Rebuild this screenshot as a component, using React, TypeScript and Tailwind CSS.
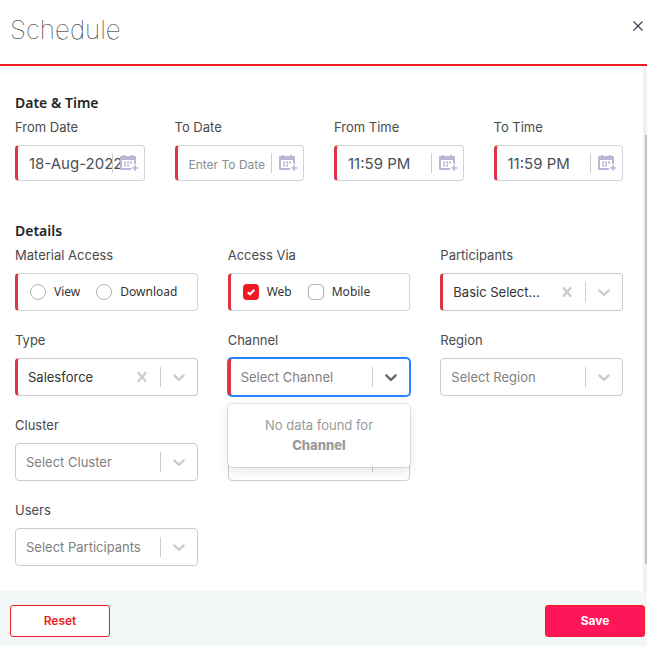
import React from "react";

const FONT = "font-['Inter','Open_Sans',sans-serif]";
const ALT_FONT = "font-['Noto_Sans','Open_Sans',sans-serif]";

function CalendarIcon() {
  return (
    <svg viewBox="0 0 19 16" className="h-4 w-[19px]" fill="#b9b7d6" aria-hidden="true">
      <path d="M3 0h2v2H3zM11 0h2v2h-2z" />
      <path d="M1 1h14a1 1 0 0 1 1 1v3H0V2a1 1 0 0 1 1-1z" />
      <path d="M0 5h2v8h9v2H1a1 1 0 0 1-1-1zM14 5h2v4h-2z" />
      <path d="M4 6.5h2v2H4zM7 6.5h2v2H7zM10 6.5h2v2h-2zM4 9.5h2v2H4zM7 9.5h2v2H7z" />
      <path d="M14.3 10h1.6v2.2h2.3v1.6h-2.3V16h-1.6v-2.2H12v-1.6h2.3z" />
    </svg>
  );
}

function Chevron({ active = false }: { active?: boolean }) {
  return (
    <svg viewBox="0 0 20 20" width="20" height="20" fill={active ? "#666666" : "#cccccc"} aria-hidden="true">
      <path d="M4.516 7.548c0.436-0.446 1.043-0.481 1.576 0l3.908 3.747 3.908-3.747c0.533-0.481 1.141-0.446 1.574 0 0.436 0.445 0.408 1.197 0 1.615-0.406 0.418-4.695 4.502-4.695 4.502-0.217 0.223-0.502 0.335-0.787 0.335s-0.57-0.112-0.789-0.335c0 0-4.287-4.084-4.695-4.502s-0.436-1.17 0-1.615z" />
    </svg>
  );
}

function ClearIcon() {
  return (
    <svg viewBox="0 0 20 20" width="20" height="20" fill="#cccccc" aria-hidden="true">
      <path d="M14.348 14.849c-0.469 0.469-1.229 0.469-1.697 0l-2.651-3.030-2.651 3.029c-0.469 0.469-1.229 0.469-1.697 0-0.469-0.469-0.469-1.229 0-1.697l2.758-3.15-2.759-3.152c-0.469-0.469-0.469-1.228 0-1.697s1.228-0.469 1.697 0l2.652 3.031 2.651-3.031c0.469-0.469 1.228-0.469 1.697 0s0.469 1.229 0 1.697l-2.758 3.152 2.758 3.15c0.469 0.469 0.469 1.229 0 1.698z" />
    </svg>
  );
}

const labelClass = "block text-[13px] leading-5 text-[#4a4a4a]";

function PickerField({ id, label, value, placeholder }: { id: string; label: string; value?: string; placeholder?: string }) {
  return (
    <div className="min-w-0">
      <label htmlFor={id} className={labelClass}>{label}</label>
      <div className="relative mt-2">
        <input
          id={id}
          type="text"
          defaultValue={value}
          placeholder={placeholder}
          className="block h-9 w-full rounded border border-l-3 border-[#ced4da] border-l-[#dc3545] bg-white pl-[11px] text-[15px] text-[#495057] outline-none placeholder:text-xs placeholder:text-[#868e96]"
        />
        <div className="pointer-events-none absolute inset-y-0 right-[6px] flex items-center gap-[7px]">
          <span className="h-5 w-px bg-[#cccccc]" />
          <CalendarIcon />
        </div>
      </div>
    </div>
  );
}

type SelectProps = {
  id: string;
  label?: string;
  value?: string;
  placeholder?: string;
  required?: boolean;
  focused?: boolean;
  children?: React.ReactNode;
};

function SelectField({ id, label, value, placeholder, required, focused, children }: SelectProps) {
  const edge = required ? "border-l-3 border-l-[#dc3545]" : "border-l-[#cccccc]";
  const ring = focused
    ? "border-y-[#2684ff] border-r-[#2684ff] ring-1 ring-[#2684ff]"
    : "border-y-[#cccccc] border-r-[#cccccc]";
  return (
    <div className="relative min-w-0">
      <label htmlFor={id} className={`${labelClass} min-h-5`}>{label}</label>
      <div className={`mt-2 flex h-[38px] items-center rounded border bg-white pl-[10px] ${edge} ${ring}`}>
        <select
          id={id}
          className={`h-full min-w-0 flex-1 appearance-none bg-transparent pt-0.5 text-[13px] outline-none ${value ? "text-[#333333]" : "text-[#808080]"}`}
        >
          <option>{value ?? placeholder}</option>
        </select>
        {value && (
          <button type="button" className="mr-2">
            <ClearIcon />
          </button>
        )}
        <span className="h-5 w-px bg-[#cccccc]" />
        <span className="px-2">
          <Chevron active={focused} />
        </span>
      </div>
      {children}
    </div>
  );
}

function ChoiceBox({ legend, children }: { legend: string; children: React.ReactNode }) {
  return (
    <fieldset className="min-w-0">
      <legend className={labelClass}>{legend}</legend>
      <div className={`mt-2 flex h-[38px] items-center rounded border border-l-3 border-[#ced4da] border-l-[#dc3545] text-xs text-[#333333] ${ALT_FONT}`}>
        {children}
      </div>
    </fieldset>
  );
}

export default function App() {
  return (
    <div className={`flex min-h-screen flex-col bg-white ${FONT}`}>
      <header className="flex h-[66px] items-start justify-between border-b-2 border-[#ed1c24] pl-[10px] pr-[3px]">
        <h1 className="mt-3 text-[26px] font-thin leading-9 text-[#111111]">Schedule</h1>
        <button type="button" aria-label="Close" className="mt-5">
          <svg viewBox="0 0 12 12" className="size-3" fill="none" stroke="#333f50" strokeWidth="1.1">
            <path d="M1.5 1.5l9 9M10.5 1.5l-9 9" />
          </svg>
        </button>
      </header>

      <div className="flex flex-1">
        <main className="min-w-0 flex-1 border-t-7 border-[#f8f9fb] pb-[25px] pl-[15px] pr-5 pt-[18px]">
          <h2 className={`text-sm font-semibold leading-6 text-[#212529] ${ALT_FONT}`}>Date &amp; Time</h2>
          <div className="mt-0.5 grid grid-cols-4 gap-x-[30px]">
            <PickerField id="from-date" label="From Date" value="18-Aug-2022" />
            <PickerField id="to-date" label="To Date" placeholder="Enter To Date" />
            <PickerField id="from-time" label="From Time" value="11:59 PM" />
            <PickerField id="to-time" label="To Time" value="11:59 PM" />
          </div>

          <h2 className={`mt-[38px] text-sm font-semibold leading-6 text-[#212529] ${ALT_FONT}`}>Details</h2>
          <div className="mt-0.5 grid grid-cols-3 gap-x-[30px] gap-y-[19px]">
            <ChoiceBox legend="Material Access">
              <label className="ml-3 flex items-center gap-2">
                <input type="radio" name="access" className="size-4 appearance-none rounded-full border border-[#adb5bd] bg-white" />
                View
              </label>
              <label className="ml-4 flex items-center gap-2">
                <input type="radio" name="access" className="size-4 appearance-none rounded-full border border-[#adb5bd] bg-white" />
                Download
              </label>
            </ChoiceBox>
            <ChoiceBox legend="Access Via">
              <label className="ml-3 flex items-center gap-2">
                <span className="grid size-4">
                  <input type="checkbox" defaultChecked className="col-start-1 row-start-1 size-4 appearance-none rounded bg-[#ed1c24]" />
                  <svg viewBox="0 0 16 16" className="pointer-events-none col-start-1 row-start-1 size-4" fill="none" stroke="white" strokeWidth="2">
                    <path d="M4.8 8.2l2.2 2.1 4.3-4.5" />
                  </svg>
                </span>
                Web
              </label>
              <label className="ml-4 flex items-center gap-2">
                <input type="checkbox" className="size-4 appearance-none rounded border border-[#adb5bd] bg-white" />
                Mobile
              </label>
            </ChoiceBox>
            <SelectField id="participants" label="Participants" value="Basic Select..." required />
            <SelectField id="type" label="Type" value="Salesforce" required />
            <SelectField id="channel" label="Channel" placeholder="Select Channel" required focused>
              <div className="absolute inset-x-0 top-full z-10 mt-2 rounded bg-white pb-3 pt-[11px] text-center text-[13px] leading-5 text-[#999999] shadow-[0_0_0_1px_rgba(0,0,0,0.1),0_4px_11px_rgba(0,0,0,0.1)]">
                No data found for <strong className="block font-extrabold">Channel</strong>
              </div>
            </SelectField>
            <SelectField id="region" label="Region" placeholder="Select Region" />
            <SelectField id="cluster" label="Cluster" placeholder="Select Cluster" />
            <SelectField id="area" />
            <div />
            <SelectField id="users" label="Users" placeholder="Select Participants" />
          </div>
        </main>
        <div className="w-1 bg-[#f1f1f1] pl-0.5 pt-[69px]">
          <div className="h-[429px] bg-[#c1c1c1]" />
        </div>
      </div>

      <footer className="flex justify-between bg-[#f3f7f8] pb-[9px] pl-[10px] pr-0.5 pt-[14px]">
        <button type="button" className="h-8 w-[100px] rounded-[3px] border border-[#ed1c24] bg-white text-xs font-semibold text-[#ed1c24]">
          Reset
        </button>
        <button type="button" className="h-8 w-[100px] rounded-[3px] border border-[#ed1c24] bg-[#ff1659] text-xs font-bold text-white">
          Save
        </button>
      </footer>
    </div>
  );
}
